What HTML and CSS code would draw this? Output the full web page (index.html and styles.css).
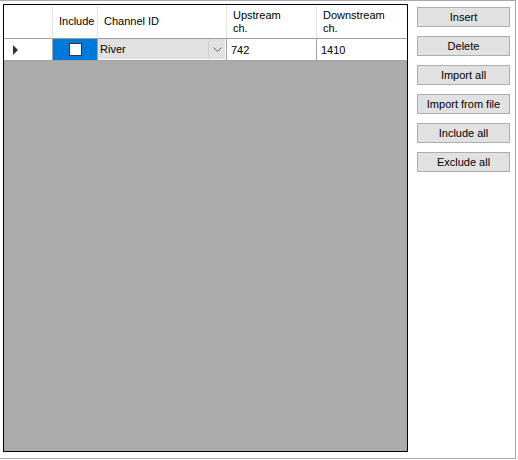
FILE: index.html
```html
<!DOCTYPE html>
<html lang="en">
<head>
    <meta charset="UTF-8">
    <title>Channels</title>
    <link rel="stylesheet" href="styles.css">
</head>
<body>
    <div class="window">
        <!-- Tabla de canales -->
        <div class="grid">
            <div class="row head">
                <div class="cell rowhead"></div>
                <div class="cell c-include">Include</div>
                <div class="cell c-channel">Channel ID</div>
                <div class="cell c-up">Upstream ch.</div>
                <div class="cell c-down">Downstream ch.</div>
            </div>
            <div class="row data">
                <div class="cell rowhead"><span class="arrow"></span></div>
                <div class="cell c-include selected"><span class="check"></span></div>
                <div class="cell c-channel">
                    <div class="combo">
                        <span class="combo-text">River</span>
                        <span class="combo-btn">
                            <svg width="9" height="5" viewBox="0 0 9 5"><path d="M0.5 0.5 L4.5 4.5 L8.5 0.5" fill="none" stroke="#606060" stroke-width="1"/></svg>
                        </span>
                    </div>
                </div>
                <div class="cell c-up">742</div>
                <div class="cell c-down">1410</div>
            </div>
        </div>

        <!-- Botones -->
        <div class="buttons">
            <button type="button">Insert</button>
            <button type="button">Delete</button>
            <button type="button">Import all</button>
            <button type="button">Import from file</button>
            <button type="button">Include all</button>
            <button type="button">Exclude all</button>
        </div>
    </div>
</body>
</html>
```

FILE: styles.css
```css
* {
    margin: 0;
    padding: 0;
    box-sizing: border-box;
}

body {
    background: #ffffff;
    font-family: 'Liberation Sans', Arial, sans-serif;
    font-size: 11px;
    color: #000000;
}

.window {
    width: 516px;
    height: 459px;
    border-top: 1px solid #a8a8b4;
    border-right: 1px solid #a8a8b4;
    border-bottom: 1px solid #a8a8b4;
    padding: 3px 0 0 3px;
    display: flex;
    align-items: flex-start;
}

.grid {
    width: 405px;
    height: 448px;
    border: 1px solid #000000;
    background: #ababab;
}

.row {
    display: flex;
    background: #ffffff;
}

.row.head {
    height: 34px;
    border-bottom: 1px solid #a0a0a0;
}

.row.data {
    height: 22px;
    border-bottom: 1px solid #a0a0a0;
}

.cell {
    border-right: 1px solid #a0a0a0;
    display: flex;
    align-items: center;
    padding-left: 4px;
    white-space: nowrap;
}

.head .cell {
    border-right-color: #e3e3e3;
    white-space: normal;
    line-height: 13px;
}

.rowhead { width: 49px; }
.c-include { width: 45px; }
.c-channel { width: 129px; }
.c-up { width: 90px; }
.c-down { width: 89px; border-right: none; }

.head .c-include { padding-left: 6px; }
.head .c-channel { padding-left: 6px; }
.head .c-up,
.head .c-down { padding-left: 6px; padding-right: 20px; }

.arrow {
    margin-left: 5px;
    width: 0;
    height: 0;
    border-top: 5px solid transparent;
    border-bottom: 5px solid transparent;
    border-left: 5px solid #333333;
}

.selected {
    background: #0078d7;
    justify-content: center;
    padding-left: 0;
}

.check {
    width: 13px;
    height: 13px;
    background: #ffffff;
    border: 1px solid #333333;
}

.data .c-channel {
    padding: 0;
    align-items: stretch;
}

.combo {
    flex: 1;
    margin: 0 1px 1px 0;
    background: #e1e1e1;
    display: flex;
    align-items: center;
}

.combo-text {
    flex: 1;
    padding-left: 2px;
}

.combo-btn {
    width: 17px;
    height: 100%;
    border-left: 1px solid #cfcfcf;
    display: flex;
    align-items: center;
    justify-content: center;
}

.buttons {
    margin-left: 9px;
    padding-top: 3px;
    display: flex;
    flex-direction: column;
    gap: 9px;
}

button {
    width: 93px;
    height: 20px;
    background: #e1e1e1;
    border: 1px solid #adadad;
    font-family: 'Liberation Sans', Arial, sans-serif;
    font-size: 11px;
    color: #000000;
}
```
